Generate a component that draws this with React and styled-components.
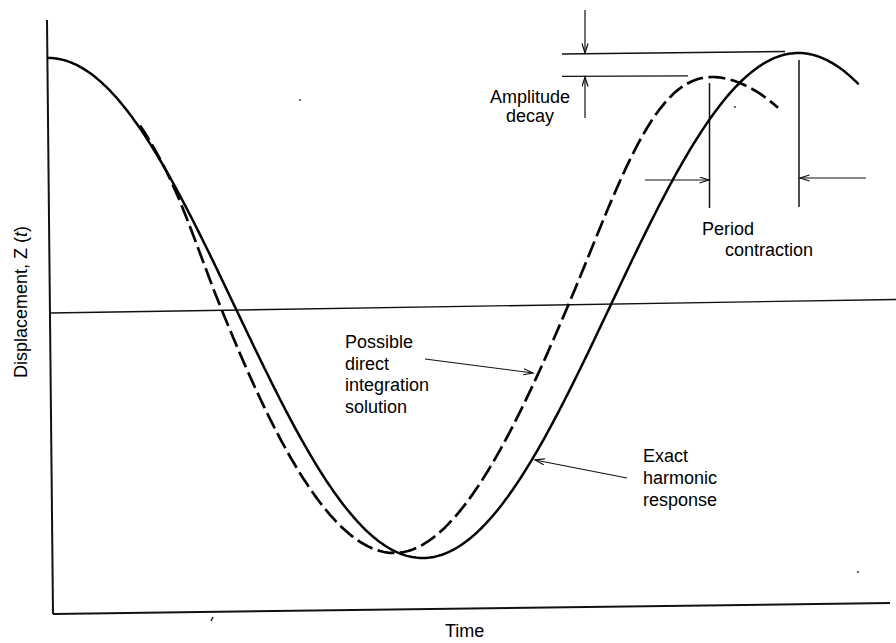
import React from 'react';
import styled, { createGlobalStyle } from 'styled-components';

const GlobalStyle = createGlobalStyle`
  html, body {
    margin: 0;
    padding: 0;
    background: #ffffff;
  }
`;

const Figure = styled.div`
  position: relative;
  width: 896px;
  height: 643px;
  overflow: hidden;
  background: #ffffff;
  font-family: 'Liberation Sans', Arial, sans-serif;
  font-size: 18px;
  color: #000000;
`;

const Plot = styled.svg`
  position: absolute;
  top: 0;
  left: 0;
  display: block;
`;

const Label = styled.div`
  position: absolute;
  left: ${p => p.$x}px;
  top: ${p => p.$y}px;
  width: ${p => (p.$w ? `${p.$w}px` : 'auto')};
  line-height: ${p => p.$lh || 22}px;
  text-align: ${p => p.$align || 'left'};
  white-space: nowrap;
`;

const LabelLine = styled.span`
  display: block;
  padding-left: ${p => p.$indent || 0}px;
`;

const AxisTitle = styled.div`
  position: absolute;
  left: -59.5px;
  top: 290.5px;
  width: 160px;
  line-height: 22px;
  text-align: center;
  white-space: nowrap;
  transform: rotate(-90deg);
  transform-origin: 50% 50%;
`;

const Var = styled.span`
  font-style: italic;
`;

// monotone cubic interpolation, keeps the hand drawn curves smooth
function pchip(xs, ys) {
  const n = xs.length;
  const h = [];
  const d = [];
  for (let i = 0; i < n - 1; i++) {
    h[i] = xs[i + 1] - xs[i];
    d[i] = (ys[i + 1] - ys[i]) / h[i];
  }
  const m = new Array(n);
  m[0] = d[0];
  m[n - 1] = d[n - 2];
  for (let i = 1; i < n - 1; i++) {
    if (d[i - 1] * d[i] <= 0) {
      m[i] = 0;
    } else {
      const w1 = 2 * h[i] + h[i - 1];
      const w2 = h[i] + 2 * h[i - 1];
      m[i] = (w1 + w2) / (w1 / d[i - 1] + w2 / d[i]);
    }
  }
  return x => {
    let i = 0;
    while (i < n - 2 && x > xs[i + 1]) i++;
    const t = Math.min(1, Math.max(0, (x - xs[i]) / h[i]));
    const t2 = t * t;
    const t3 = t2 * t;
    return (
      (2 * t3 - 3 * t2 + 1) * ys[i] +
      (t3 - 2 * t2 + t) * h[i] * m[i] +
      (-2 * t3 + 3 * t2) * ys[i + 1] +
      (t3 - t2) * h[i] * m[i + 1]
    );
  };
}

const TAU = Math.PI * 2;
const mid = x => 309.25 - 0.00667 * (x - 48);

const exactY = x => mid(x) - 251.25 * Math.cos((TAU * (x - 48)) / 750);

const dashedPhase = pchip(
  [48, 165, 221, 396, 568, 712, 778],
  [0, (TAU * 117) / 750, Math.PI / 2, Math.PI, 1.5 * Math.PI, TAU, TAU + 0.53]
);
const dashedAmp = pchip([48, 165, 396, 712, 778], [251.25, 251.25, 246, 227.8, 227.8]);
const dashedY = x => mid(x) - dashedAmp(x) * Math.cos(dashedPhase(x));

function trace(fn, from, to, step = 2) {
  const pts = [];
  for (let x = from; x < to; x += step) pts.push(`${x.toFixed(1)},${fn(x).toFixed(1)}`);
  pts.push(`${to.toFixed(1)},${fn(to).toFixed(1)}`);
  return `M${pts.join(' L')}`;
}

const exactPath = trace(exactY, 48, 858);
const dashedPath = trace(dashedY, 140, 778);

const guides = [
  { x1: 47, y1: 20, x2: 53, y2: 614, w: 2 },
  { x1: 53, y1: 614, x2: 890, y2: 603, w: 2 },
  { x1: 50, y1: 313, x2: 896, y2: 299.5, w: 1.4 },
  { x1: 562, y1: 54, x2: 785, y2: 51.5, w: 1.3 },
  { x1: 562, y1: 76.3, x2: 688, y2: 75.8, w: 1.3 },
  { x1: 709.5, y1: 83, x2: 709.5, y2: 208, w: 1.5 },
  { x1: 799, y1: 60, x2: 799, y2: 207, w: 1.5 },
];

const arrows = [
  { x1: 585, y1: 10, x2: 585, y2: 53 },
  { x1: 585, y1: 118, x2: 585, y2: 77 },
  { x1: 645, y1: 180, x2: 709, y2: 180 },
  { x1: 866, y1: 178, x2: 800, y2: 178 },
  { x1: 425, y1: 359, x2: 533, y2: 373 },
  { x1: 627, y1: 478, x2: 535, y2: 460 },
];

const specks = [
  [300, 100, 1],
  [735, 107, 1],
  [858, 572, 1],
];

function App() {
  return (
    <>
      <GlobalStyle />
      <Figure>
        <Plot width="896" height="643" viewBox="0 0 896 643">
          <defs>
            <marker
              id="head"
              markerUnits="userSpaceOnUse"
              markerWidth="12"
              markerHeight="8"
              refX="10"
              refY="3.5"
              orient="auto"
            >
              <path d="M0.5,0.5 L10,3.5 L0.5,6.5" fill="none" stroke="#111" strokeWidth="1.2" />
            </marker>
          </defs>

          {guides.map((g, i) => (
            <line key={i} x1={g.x1} y1={g.y1} x2={g.x2} y2={g.y2} stroke="#111" strokeWidth={g.w} />
          ))}

          {arrows.map((a, i) => (
            <line
              key={i}
              x1={a.x1}
              y1={a.y1}
              x2={a.x2}
              y2={a.y2}
              stroke="#111"
              strokeWidth="1.2"
              markerEnd="url(#head)"
            />
          ))}

          <path d={exactPath} fill="none" stroke="#050505" strokeWidth="2.5" strokeLinecap="round" />
          <path
            d={dashedPath}
            fill="none"
            stroke="#050505"
            strokeWidth="2.7"
            strokeDasharray="17 5.5"
          />

          {specks.map(([x, y, r], i) => (
            <circle key={i} cx={x} cy={y} r={r} fill="#333" />
          ))}
          <line x1="213" y1="617" x2="211" y2="621" stroke="#222" strokeWidth="1.5" />
        </Plot>

        <Label $x={480} $y={88.3} $w={100} $align="center" $lh={19}>
          <LabelLine>Amplitude</LabelLine>
          <LabelLine>decay</LabelLine>
        </Label>

        <Label $x={702} $y={219.3} $lh={21}>
          <LabelLine>Period</LabelLine>
          <LabelLine $indent={23}>contraction</LabelLine>
        </Label>

        <Label $x={345} $y={332} $lh={21.5}>
          <LabelLine>Possible</LabelLine>
          <LabelLine>direct</LabelLine>
          <LabelLine>integration</LabelLine>
          <LabelLine>solution</LabelLine>
        </Label>

        <Label $x={643} $y={444.5}>
          <LabelLine>Exact</LabelLine>
          <LabelLine>harmonic</LabelLine>
          <LabelLine>response</LabelLine>
        </Label>

        <Label $x={445} $y={619.8}>
          Time
        </Label>

        <AxisTitle>
          Displacement, Z (<Var>t</Var>)
        </AxisTitle>
      </Figure>
    </>
  );
}

export default App;
